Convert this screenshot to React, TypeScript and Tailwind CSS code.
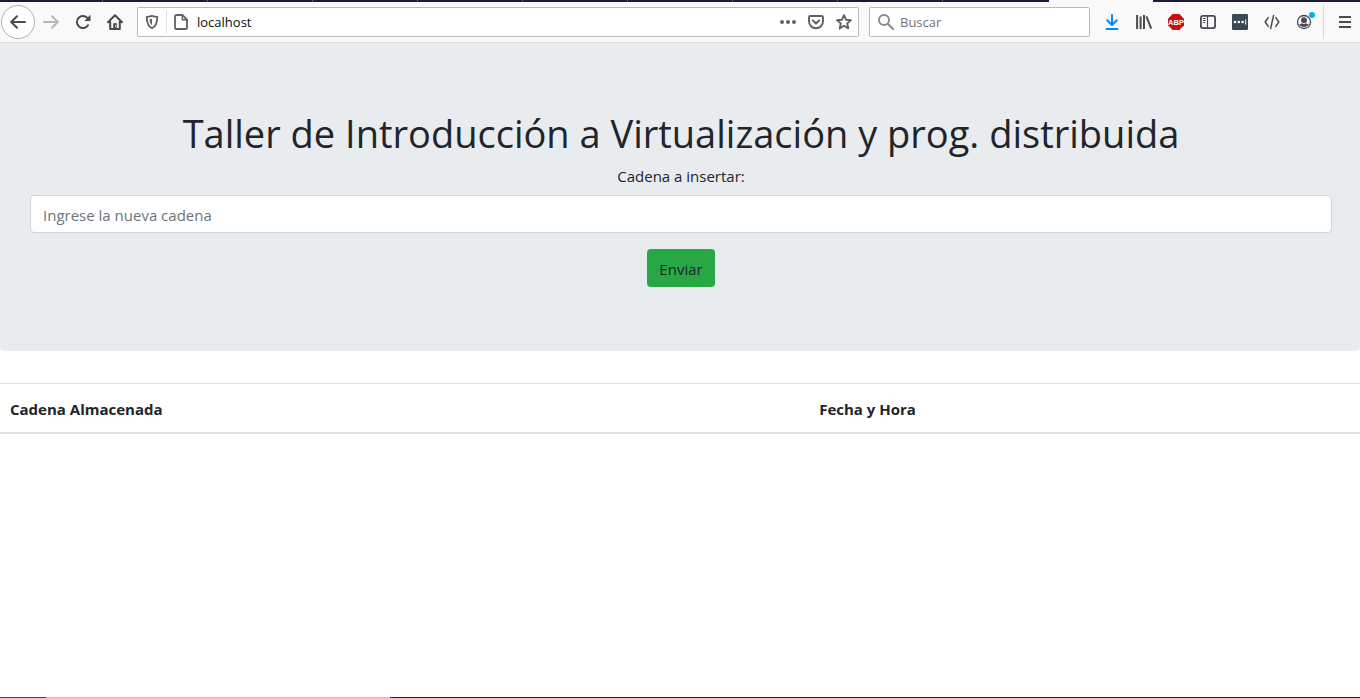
import type { ReactNode, SVGProps } from "react";

function Icon({ children, ...props }: SVGProps<SVGSVGElement> & { children: ReactNode }) {
  return (
    <svg
      width="16"
      height="16"
      viewBox="0 0 16 16"
      fill="none"
      stroke="currentColor"
      strokeWidth="2"
      strokeLinecap="round"
      strokeLinejoin="round"
      aria-hidden="true"
      {...props}
    >
      {children}
    </svg>
  );
}

function ToolButton({ label, children }: { label: string; children: ReactNode }) {
  return (
    <button type="button" aria-label={label} className="flex h-8 w-8 shrink-0 items-center justify-center">
      {children}
    </button>
  );
}

function TabStrip() {
  return (
    <div className="flex h-0.5 shrink-0 overflow-hidden bg-[#1d1a3b]">
      <div className="w-[103px] shrink-0 border-r border-[#5d5b77]" />
      {[1, 2, 3, 4, 5, 6, 7, 8].map((tab) => (
        <div key={tab} className="w-[105px] shrink-0 border-r border-[#5d5b77]" />
      ))}
      <div className="w-[106px] shrink-0" />
      <div className="w-[104px] shrink-0 bg-[#f9f9fa]" />
    </div>
  );
}

function AddressBar() {
  return (
    <div className="ml-1.5 flex h-[30px] min-w-0 flex-1 items-center rounded-xs border border-[#b9b9b9] bg-white text-[#606060]">
      <button type="button" aria-label="Protección" className="flex h-full w-7 shrink-0 items-center justify-center">
        <Icon>
          <path d="M8 1.9 C10 2.6 11.8 2.9 13.3 2.9 C13.3 8.6 12.3 12 8 14.2 C3.7 12 2.7 8.6 2.7 2.9 C4.2 2.9 6 2.6 8 1.9Z" strokeWidth="1.8" />
          <path d="M8 4.8 V11.2 C6 9.8 5.6 7.6 5.5 5.3Z" fill="currentColor" stroke="none" />
        </Icon>
      </button>
      <div className="h-[22px] w-px bg-[#dedede]" />
      <button type="button" aria-label="Información" className="flex h-full w-7 shrink-0 items-center justify-center">
        <Icon>
          <path d="M3.6 1 H9.4 L14 5.6 V13.4 A1.6 1.6 0 0 1 12.4 15 H3.6 A1.6 1.6 0 0 1 2 13.4 V2.6 A1.6 1.6 0 0 1 3.6 1Z" strokeWidth="1.8" />
          <path d="M9.3 1.4 V5.7 H13.6" strokeWidth="1.4" />
        </Icon>
      </button>
      <input
        type="text"
        aria-label="Dirección"
        defaultValue="localhost"
        className="ml-0.5 min-w-0 flex-1 bg-transparent pt-0.5 text-[13px] text-[#0c0c0d] outline-none"
      />
      <button type="button" aria-label="Acciones de página" className="flex h-full w-7 items-center justify-center">
        <Icon fill="currentColor" stroke="none">
          <circle cx="2" cy="8" r="2" />
          <circle cx="8" cy="8" r="2" />
          <circle cx="14" cy="8" r="2" />
        </Icon>
      </button>
      <button type="button" aria-label="Guardar en Pocket" className="flex h-full w-7 items-center justify-center">
        <Icon>
          <path d="M2.2 2 H13.8 A1.2 1.2 0 0 1 15 3.2 V7.3 A7 7 0 0 1 1 7.3 V3.2 A1.2 1.2 0 0 1 2.2 2Z" strokeWidth="1.9" />
          <path d="M4.8 6.4 L8 9.5 L11.2 6.4" strokeWidth="1.9" />
        </Icon>
      </button>
      <button type="button" aria-label="Añadir a marcadores" className="flex h-full w-7 items-center justify-center">
        <Icon>
          <path d="M8 1.2 L10 5.7 L14.9 6.2 L11.2 9.4 L12.3 14.4 L8 11.8 L3.7 14.4 L4.8 9.4 L1.1 6.2 L6 5.7Z" strokeWidth="1.9" />
        </Icon>
      </button>
    </div>
  );
}

function BrowserToolbar() {
  return (
    <div className="flex h-[41px] shrink-0 items-center border-b border-[#e0e0e1] bg-[#f9f9fa] text-[#4a4a4f]">
      <button
        type="button"
        aria-label="Atrás"
        className="ml-px flex h-[34px] w-[34px] shrink-0 items-center justify-center rounded-full border border-[#b1b1b3] bg-white"
      >
        <Icon>
          <path d="M15 8 H1.5 M7 2.2 L1.2 8 L7 13.8" />
        </Icon>
      </button>
      <ToolButton label="Adelante">
        <Icon className="text-[#b8b8ba]">
          <path d="M1 8 H14.5 M9 2.2 L14.8 8 L9 13.8" />
        </Icon>
      </ToolButton>
      <ToolButton label="Recargar">
        <Icon>
          <path d="M13 11.2 A6 6 0 1 1 12.6 4.2" />
          <path d="M15.5 0.8 V7 H9.3Z" fill="currentColor" stroke="none" />
        </Icon>
      </ToolButton>
      <ToolButton label="Inicio">
        <Icon>
          <path d="M1 8.2 L8 1.3 L15 8.2 M3.2 7.8 V14.9 H12.8 V7.8" />
          <path d="M6.2 15 V9.2 H9.8 V15Z" fill="currentColor" stroke="none" />
          <path d="M8.6 11.8 V12.6" stroke="#ffffff" strokeWidth="1" />
        </Icon>
      </ToolButton>
      <AddressBar />
      <div className="ml-2.5 flex h-[30px] w-[221px] shrink-0 items-center rounded-xs border border-[#b9b9b9] bg-white pl-2">
        <Icon className="shrink-0 text-[#8c8c8e]">
          <circle cx="6" cy="6" r="5" />
          <path d="M9.8 9.8 L15 15" />
        </Icon>
        <input
          type="search"
          aria-label="Buscar"
          placeholder="Buscar"
          className="ml-1.5 min-w-0 flex-1 bg-transparent pt-0.5 text-[13px] text-[#0c0c0d] outline-none placeholder:text-[#737373]"
        />
      </div>
      <div className="ml-1.5 flex shrink-0 items-center">
        <ToolButton label="Descargas">
          <Icon className="text-[#0a84ff]">
            <path d="M8 1 V10.6 M3.2 6.2 L8 11 L12.8 6.2 M2.6 15 H13.4" />
          </Icon>
        </ToolButton>
        <ToolButton label="Biblioteca">
          <Icon strokeLinecap="butt">
            <path d="M1.1 1 V15 M4.6 2.5 V15 M8 1 V15 M10.4 2.4 L15.2 14.6" />
          </Icon>
        </ToolButton>
        <ToolButton label="Adblock Plus">
          <svg width="16" height="16" viewBox="0 0 16 16" aria-hidden="true">
            <path d="M4.7 0 H11.3 L16 4.7 V11.3 L11.3 16 H4.7 L0 11.3 V4.7Z" fill="#c70d0d" />
            <text x="8" y="10.8" textAnchor="middle" fontSize="7.5" fontWeight="700" fill="#ffffff" fontFamily="Liberation Sans, sans-serif">
              ABP
            </text>
          </svg>
        </ToolButton>
        <ToolButton label="Barra lateral">
          <Icon>
            <rect x="0.9" y="1.9" width="14.2" height="12.2" rx="2" strokeWidth="1.8" />
            <path d="M7.5 2 V14" strokeWidth="1.2" strokeLinecap="butt" />
            <path d="M3 4.5 H5.6 M3 6.5 H5.6 M3 8.5 H5" strokeWidth="1" strokeLinecap="butt" />
          </Icon>
        </ToolButton>
        <ToolButton label="Contraseñas">
          <svg width="16" height="16" viewBox="0 0 16 16" aria-hidden="true">
            <rect width="16" height="16" rx="1.2" fill="#3b4954" />
            <g fill="#ffffff">
              <circle cx="3" cy="8" r="1.3" />
              <circle cx="6.8" cy="8" r="1.3" />
              <circle cx="10.6" cy="8" r="1.3" />
              <rect x="13.2" y="5.4" width="1" height="5.2" />
            </g>
          </svg>
        </ToolButton>
        <ToolButton label="Desarrollador">
          <Icon strokeWidth="1.5">
            <path d="M4.2 3.6 L1.2 8 L4.2 12.4 M11.8 3.6 L14.8 8 L11.8 12.4 M9.6 1.4 L6.6 14.6" />
          </Icon>
        </ToolButton>
        <ToolButton label="Cuenta">
          <svg width="24" height="24" viewBox="-4 -4 24 24" aria-hidden="true">
            <circle cx="8" cy="8" r="6.5" fill="none" stroke="#4a4a4f" strokeWidth="1.3" />
            <circle cx="8" cy="6.2" r="2.9" fill="#4a4a4f" />
            <path d="M3.3 10 C4.8 10 5.4 9.7 6 9.2 C7.2 10.1 8.8 10.1 10 9.2 C10.6 9.7 11.2 10 12.7 10 C11.8 12.2 10 13 8 13 C6 13 4.2 12.2 3.3 10Z" fill="#4a4a4f" />
            <circle cx="16" cy="1" r="3" fill="#00b3f4" />
          </svg>
        </ToolButton>
      </div>
      <div className="ml-[3px] h-[34px] w-px shrink-0 bg-[#d7d7db]" />
      <button type="button" aria-label="Menú" className="mr-[-1px] ml-[5px] flex h-8 w-8 shrink-0 items-center justify-center">
        <Icon strokeLinecap="butt">
          <path d="M2 3 H14 M2 8 H14 M2 13 H14" />
        </Icon>
      </button>
    </div>
  );
}

export default function App() {
  return (
    <div className="flex min-h-screen flex-col overflow-x-hidden bg-white font-['Open_Sans','Noto_Sans',sans-serif] text-[#212529]">
      <TabStrip />
      <BrowserToolbar />
      <main className="flex-1">
        <form
          className="flex flex-col items-center rounded-b-sm bg-[#e9ecef] py-16 pr-7 pl-[30px]"
          onSubmit={(event) => event.preventDefault()}
        >
          <h1 className="mb-2 pt-1 text-center text-[38px] leading-[44px]">
            Taller de Introducción a Virtualización y prog. distribuida
          </h1>
          <label htmlFor="cadena" className="mb-2 pt-0.5 text-[15px] leading-[22px]">
            Cadena a insertar:
          </label>
          <input
            id="cadena"
            type="text"
            placeholder="Ingrese la nueva cadena"
            className="mb-4 h-[38px] w-full rounded-sm border border-[#ced4da] bg-white px-3 pt-0.5 text-[15px] placeholder:text-[#6c757d]"
          />
          <button type="submit" className="h-[38px] rounded-sm bg-[#28a745] px-3 pt-0.5 text-[15px] leading-6">
            Enviar
          </button>
        </form>
        <table className="mt-8 w-full table-fixed border-collapse text-left text-[15px] leading-6">
          <thead>
            <tr className="border-t border-b-2 border-[#dee2e6]">
              <th scope="col" className="w-[59.5%] px-2.5 pt-[13px] pb-[11px] font-bold">
                Cadena Almacenada
              </th>
              <th scope="col" className="px-2.5 pt-[13px] pb-[11px] font-bold">
                Fecha y Hora
              </th>
            </tr>
          </thead>
        </table>
      </main>
      <div className="flex h-px shrink-0 bg-[#1b2138]">
        <div className="w-[46px] bg-[#3a4350]" />
        <div className="w-[344px] bg-[#c4c4c6]" />
      </div>
    </div>
  );
}
